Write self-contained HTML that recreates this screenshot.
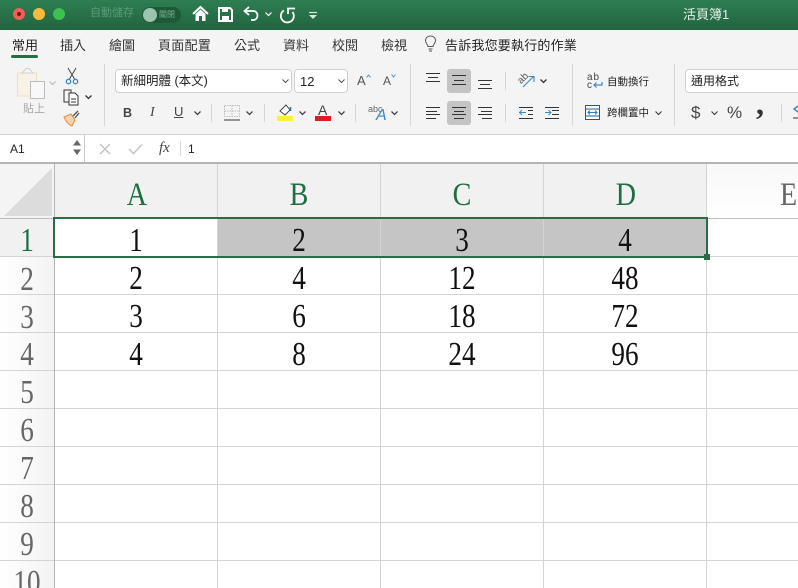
<!DOCTYPE html>
<html><head><meta charset="utf-8">
<style>
html,body{margin:0;padding:0;width:798px;height:588px;overflow:hidden}
#r{position:relative;width:798px;height:588px;overflow:hidden;background:#fff;font-family:"Liberation Sans","Noto Sans CJK TC",sans-serif;color:#333}
.a{position:absolute}
.t{position:absolute;white-space:nowrap;line-height:1}
.h{position:absolute;background:#d4d4d4}
.n{position:absolute;font-family:"Liberation Serif",serif;font-size:34px;line-height:38px;text-align:center;color:#111;transform:scaleX(.8)}
.rh{position:absolute;left:0;width:54px;height:38px;font-family:"Liberation Serif",serif;font-size:34px;line-height:38px;text-align:center;color:#666;transform:scaleX(.8)}
.rb{position:absolute;left:0;width:54px;background:linear-gradient(90deg,#fff,#f3f3f3)}
.ch{position:absolute;top:164px;height:54px;width:163px;font-family:"Liberation Serif",serif;font-size:33px;line-height:62px;text-align:center;color:#1f6e43;background:#f1f1f1}
.ch span{display:inline-block;transform:scaleX(.85)}
svg{position:absolute;overflow:visible}
.box{position:absolute;background:#fff;border:1px solid #d0d0d0;border-radius:4px;box-sizing:border-box}
.sep{position:absolute;width:1px;background:#d6d6d6}
.gb{position:absolute;background:#c4c4c4;border-radius:3px}
</style></head><body><div id="r">

<!-- title bar -->
<div class="a" style="left:0;top:0;width:798px;height:30px;background:linear-gradient(#2e7d53,#22643f)"></div>
<div class="a" style="left:13px;top:8px;width:12px;height:12px;border-radius:50%;background:#ee5f5a"></div>
<div class="a" style="left:17px;top:12px;width:4px;height:4px;border-radius:50%;background:#7a1414"></div>
<div class="a" style="left:33px;top:8px;width:12px;height:12px;border-radius:50%;background:#f6bb3d"></div>
<div class="a" style="left:53px;top:8px;width:12px;height:12px;border-radius:50%;background:#3cc04f"></div>
<div class="t" style="left:90px;top:8px;font-size:11px;color:#5c9b79">自動儲存</div>
<div class="a" style="left:142px;top:7px;width:39px;height:16px;border-radius:8px;background:#1d5a38"></div>
<div class="a" style="left:143px;top:8px;width:14px;height:14px;border-radius:50%;background:#9dc4ae"></div>
<div class="t" style="left:159px;top:11px;font-size:8px;color:#7fae95">關閉</div>
<svg style="left:192px;top:5px" width="17" height="17" viewBox="0 0 17 17"><path d="M1 9 8.500 2 16 9" fill="none" stroke="#fff" stroke-width="2"/><path d="M3.500 9V16H7V11H10V16H13.500V9L8.500 4.500Z" fill="#fff"/></svg>
<svg style="left:218px;top:7px" width="15" height="15" viewBox="0 0 15 15"><path d="M1 1H12L14 3V14H1Z" fill="none" stroke="#fff" stroke-width="2"/><rect x="4" y="1" width="6" height="4" fill="#fff"/><rect x="4" y="9" width="7" height="5" fill="#fff"/></svg>
<svg style="left:243px;top:6px" width="16" height="15" viewBox="0 0 16 15"><path d="M6 1 1.500 5 6 9M2 5H10C13 5 14.500 7 14.500 9.500S13 14 10 14H8" fill="none" stroke="#fff" stroke-width="1.800"/></svg>
<svg style="left:265px;top:12px" width="7" height="5" viewBox="0 0 7 5"><path d="M.5 .5 3.500 3.500 6.500 .5" fill="none" stroke="#fff" stroke-width="1.200"/></svg>
<svg style="left:280px;top:6px" width="16" height="16" viewBox="0 0 16 16"><path d="M15 2.500H8V8" fill="none" stroke="#fff" stroke-width="1.800"/><path d="M3.800 4.500A6.500 6.500 0 1 0 12.500 6" fill="none" stroke="#fff" stroke-width="1.800"/></svg>
<svg style="left:309px;top:12px" width="8" height="7" viewBox="0 0 8 7"><path d="M0 .5H8" stroke="#d8e8de" stroke-width="1.200"/><path d="M0 3H8L4 7Z" fill="#d8e8de"/></svg>
<div class="t" style="left:683px;top:8px;font-size:13px;color:#e6f2ea">活頁簿1</div>

<!-- tabs & ribbon background -->
<div class="a" style="left:0;top:30px;width:798px;height:104px;background:#f4f4f4"></div>
<div class="a" style="left:0;top:134px;width:798px;height:1px;background:#d2d2d2"></div>
<div class="t" style="left:12px;top:39px;font-size:13px;color:#222">常用</div>
<div class="a" style="left:11px;top:55px;width:27px;height:3px;border-radius:2px;background:#217346"></div>
<div class="t" style="left:60px;top:39px;font-size:13px">插入</div>
<div class="t" style="left:109px;top:39px;font-size:13px">繪圖</div>
<div class="t" style="left:158px;top:39px;font-size:13px;letter-spacing:.3px">頁面配置</div>
<div class="t" style="left:234px;top:39px;font-size:13px">公式</div>
<div class="t" style="left:283px;top:39px;font-size:13px">資料</div>
<div class="t" style="left:332px;top:39px;font-size:13px">校閱</div>
<div class="t" style="left:381px;top:39px;font-size:13px">檢視</div>
<svg style="left:424px;top:35px" width="13" height="17" viewBox="0 0 13 17"><path d="M4 11.500C4 9.500 1.500 8.500 1.500 5.500 1.500 3 3.500 1 6.500 1S11.500 3 11.500 5.500C11.500 8.500 9 9.500 9 11.500ZM4.500 14H8.500M5 16H8" fill="none" stroke="#555" stroke-width="1"/></svg>
<div class="t" style="left:445px;top:39px;font-size:13px;color:#222;letter-spacing:.2px">告訴我您要執行的作業</div>

<!-- clipboard -->
<svg style="left:16px;top:67px" width="30" height="35" viewBox="0 0 30 35"><path d="M1.500 6H20.500V29H1.500Z" fill="#f9f1e6" stroke="#efdcc4" stroke-width="1"/><path d="M6 6 10 1.500H13L17 6Z" fill="#f4f4f4" stroke="#cfcfcf"/><rect x="14.500" y="14.500" width="14" height="17" fill="#f8f8f8" stroke="#bcbcbc"/></svg>
<svg style="left:49px;top:81px" width="7" height="5" viewBox="0 0 7 5"><path d="M.5 .5 3.500 3.500 6.500 .5" fill="none" stroke="#bbb" stroke-width="1.200"/></svg>
<div class="t" style="left:23px;top:104px;font-size:11px;color:#a8a8a8">貼上</div>
<svg style="left:65px;top:67px" width="14" height="18" viewBox="0 0 14 18"><path d="M3 1 9.500 12M11 1 4.500 12" stroke="#444" stroke-width="1" fill="none"/><circle cx="3.500" cy="14.500" r="2.200" fill="none" stroke="#3d8ac4" stroke-width="1.300"/><circle cx="10.500" cy="14.500" r="2.200" fill="none" stroke="#3d8ac4" stroke-width="1.300"/></svg>
<svg style="left:63px;top:89px" width="16" height="17" viewBox="0 0 16 17"><path d="M6 13H1V1H8V4" fill="none" stroke="#333"/><path d="M6 4H12L15 7V16H6Z" fill="#fff" stroke="#333"/><path d="M8 10H13M8 13H13" stroke="#333"/></svg>
<svg style="left:85px;top:95px" width="7" height="5" viewBox="0 0 7 5"><path d="M.5 .5 3.500 3.500 6.500 .5" fill="none" stroke="#333" stroke-width="1.300"/></svg>
<svg style="left:63px;top:110px" width="17" height="17" viewBox="0 0 17 17"><path d="M1 7 8 4 12 10 9 16C6 15 3 12 1 7Z" fill="#f9d3ae" stroke="#e58a42"/><path d="M10 6 15 1M12 8 16 3" stroke="#555" stroke-width="1.300"/></svg>
<div class="sep" style="left:104px;top:64px;height:62px"></div>

<!-- font -->
<div class="box" style="left:115px;top:69px;width:177px;height:24px"></div>
<div class="t" style="left:121px;top:75px;font-size:12.500px;color:#222">新細明體 (本文)</div>
<svg style="left:282px;top:79px" width="7" height="5" viewBox="0 0 7 5"><path d="M.5 .5 3.500 3.500 6.500 .5" fill="none" stroke="#555" stroke-width="1.100"/></svg>
<div class="box" style="left:294px;top:69px;width:54px;height:24px"></div>
<div class="t" style="left:300px;top:75px;font-size:13px;color:#222">12</div>
<svg style="left:338px;top:79px" width="7" height="5" viewBox="0 0 7 5"><path d="M.5 .5 3.500 3.500 6.500 .5" fill="none" stroke="#555" stroke-width="1.100"/></svg>
<div class="t" style="left:357px;top:74px;font-size:13px;color:#555">A</div>
<svg style="left:366px;top:74px" width="5" height="4" viewBox="0 0 5 4"><path d="M.5 3.500 2.500 1 4.500 3.500" fill="none" stroke="#4a8fc4"/></svg>
<div class="t" style="left:383px;top:75px;font-size:12px;color:#555">A</div>
<svg style="left:391px;top:74px" width="5" height="4" viewBox="0 0 5 4"><path d="M.5 .5 2.500 3 4.500 .5" fill="none" stroke="#4a8fc4"/></svg>

<div class="t" style="left:123px;top:107px;font-size:12.500px;font-weight:bold;color:#444">B</div>
<div class="t" style="left:150px;top:106px;font-size:14px;font-style:italic;font-family:'Liberation Serif',serif;color:#444">I</div>
<div class="t" style="left:174px;top:105px;font-size:13px;color:#444;text-decoration:underline">U</div>
<svg style="left:194px;top:111px" width="7" height="5" viewBox="0 0 7 5"><path d="M.5 .5 3.500 3.500 6.500 .5" fill="none" stroke="#444" stroke-width="1.300"/></svg>
<div class="sep" style="left:211px;top:104px;height:18px"></div>
<svg style="left:224px;top:105px" width="16" height="16" viewBox="0 0 16 16"><path d="M.5 .5H15.500V11.500H.5ZM8 .5V11.500M.5 6H15.500" fill="none" stroke="#bbb" stroke-dasharray="1.500 1"/><path d="M0 15H16" stroke="#333"/></svg>
<svg style="left:246px;top:111px" width="7" height="5" viewBox="0 0 7 5"><path d="M.5 .5 3.500 3.500 6.500 .5" fill="none" stroke="#444" stroke-width="1.300"/></svg>
<div class="sep" style="left:264px;top:104px;height:18px"></div>
<svg style="left:279px;top:104px" width="14" height="13" viewBox="0 0 14 13"><path d="M1 7 7 1 11 6 6 11Z" fill="#fff" stroke="#444"/><path d="M11.500 7V3" stroke="#2a6ea6" stroke-width="1.500"/></svg>
<div class="a" style="left:277px;top:116px;width:16px;height:5px;background:#ffee3c"></div>
<svg style="left:299px;top:111px" width="7" height="5" viewBox="0 0 7 5"><path d="M.5 .5 3.500 3.500 6.500 .5" fill="none" stroke="#444" stroke-width="1.300"/></svg>
<div class="t" style="left:318px;top:103px;font-size:14px;color:#444">A</div>
<div class="a" style="left:315px;top:116px;width:16px;height:5px;background:#e01b24"></div>
<svg style="left:338px;top:111px" width="7" height="5" viewBox="0 0 7 5"><path d="M.5 .5 3.500 3.500 6.500 .5" fill="none" stroke="#444" stroke-width="1.300"/></svg>
<div class="sep" style="left:355px;top:104px;height:18px"></div>
<div class="t" style="left:368px;top:105px;font-size:9px;color:#666">abc</div>
<div class="t" style="left:376px;top:108px;font-size:16px;font-style:italic;color:#3d8ac4">A</div>
<svg style="left:391px;top:111px" width="7" height="5" viewBox="0 0 7 5"><path d="M.5 .5 3.500 3.500 6.500 .5" fill="none" stroke="#444" stroke-width="1.300"/></svg>
<div class="sep" style="left:410px;top:64px;height:62px"></div>

<!-- alignment -->
<div class="gb" style="left:447px;top:69px;width:24px;height:24px"></div>
<div class="gb" style="left:447px;top:101px;width:24px;height:24px"></div>
<svg style="left:425px;top:72px" width="72" height="60" viewBox="0 0 72 60" fill="none" stroke="#333">
<path d="M1 1.500H15M3 5.500H13M1 9.500H15"/>
<path d="M27 3.500H41M29 8.500H39M27 12.500H41"/>
<path d="M53 8.500H67M55 12.500H65M53 16.500H67"/>
<path d="M1 35.500H15M1 39.500H12M1 42.500H15M1 46.500H11"/>
<path d="M27 35.500H41M29 39.500H39M27 42.500H41M29 46.500H39"/>
<path d="M53 35.500H67M56 39.500H67M53 42.500H67M57 46.500H67"/>
</svg>
<div class="sep" style="left:505px;top:72px;height:18px"></div>
<div class="sep" style="left:505px;top:104px;height:18px"></div>
<div class="t" style="left:518px;top:74px;font-size:10px;color:#555;transform:rotate(-45deg)">ab</div>
<svg style="left:522px;top:75px" width="13" height="13" viewBox="0 0 13 13"><path d="M1 12 12 1M6.500 1.500H12V7" fill="none" stroke="#3d8ac4" stroke-width="1.100"/></svg>
<svg style="left:540px;top:79px" width="7" height="5" viewBox="0 0 7 5"><path d="M.5 .5 3.500 3.500 6.500 .5" fill="none" stroke="#333" stroke-width="1.300"/></svg>
<svg style="left:519px;top:105px" width="40" height="15" viewBox="0 0 40 15" fill="none"><path d="M0 2.500H14M9 5.500H14M9 9.500H14M0 13.500H14" stroke="#333"/><path d="M0 7.500H7M3 5 .5 7.500 3 10" stroke="#3d8ac4"/><path d="M26 2.500H40M33 5.500H40M33 9.500H40M26 13.500H40" stroke="#333"/><path d="M26 7.500H32M29.500 5 32 7.500 29.500 10" stroke="#3d8ac4"/></svg>
<div class="sep" style="left:572px;top:64px;height:62px"></div>

<!-- wrap / merge -->
<div class="t" style="left:587px;top:74px;font-size:10px;line-height:8px;color:#444;letter-spacing:1px">ab<br>c</div>
<svg style="left:593px;top:81px" width="10" height="8" viewBox="0 0 10 8"><path d="M9 1V4H1M3.500 1.500 1 4 3.500 6.500" fill="none" stroke="#3d8ac4" stroke-width="1.200"/></svg>
<div class="t" style="left:607px;top:77px;font-size:10.500px;color:#222">自動換行</div>
<svg style="left:585px;top:105px" width="15" height="15" viewBox="0 0 15 15"><rect x=".5" y=".5" width="14" height="14" fill="#fff" stroke="#1f5c8a"/><path d="M.5 4H14.500M.5 11H14.500" stroke="#1f5c8a"/><path d="M3 7.500H12M5 5.500 3 7.500 5 9.500M10 5.500 12 7.500 10 9.500" fill="none" stroke="#2a7ac0"/></svg>
<div class="t" style="left:607px;top:108px;font-size:10.500px;color:#222">跨欄置中</div>
<svg style="left:655px;top:111px" width="7" height="5" viewBox="0 0 7 5"><path d="M.5 .5 3.500 3.500 6.500 .5" fill="none" stroke="#444" stroke-width="1.200"/></svg>
<div class="sep" style="left:674px;top:64px;height:62px"></div>

<!-- number -->
<div class="box" style="left:685px;top:69px;width:120px;height:24px"></div>
<div class="t" style="left:691px;top:75px;font-size:12px;color:#222">通用格式</div>
<div class="t" style="left:691px;top:104px;font-size:17px;color:#444">$</div>
<svg style="left:711px;top:111px" width="7" height="5" viewBox="0 0 7 5"><path d="M.5 .5 3.500 3.500 6.500 .5" fill="none" stroke="#444" stroke-width="1.200"/></svg>
<div class="t" style="left:727px;top:104px;font-size:17px;color:#444">%</div>
<div class="t" style="left:756px;top:87px;font-size:32px;font-weight:bold;font-family:'Liberation Serif',serif;color:#333">,</div>
<div class="sep" style="left:781px;top:104px;height:18px"></div>
<svg style="left:793px;top:105px" width="6" height="14" viewBox="0 0 6 14"><path d="M5 1 1 4 5 7" fill="none" stroke="#3d8ac4" stroke-width="1.500"/><path d="M0 13H6" stroke="#333"/></svg>

<!-- formula bar -->
<div class="a" style="left:0;top:135px;width:798px;height:27px;background:#fff"></div>
<div class="a" style="left:84px;top:135px;width:1px;height:27px;background:#c8c8c8"></div>
<div class="t" style="left:10px;top:143px;font-size:12px;color:#222">A1</div>
<svg style="left:73px;top:139px" width="8" height="17" viewBox="0 0 8 17"><path d="M4 1 8 6.500H0ZM4 16 8 10.500H0Z" fill="#666"/></svg>
<svg style="left:99px;top:143px" width="12" height="12" viewBox="0 0 12 12"><path d="M1 1 11 11M11 1 1 11" stroke="#c4c4c4" stroke-width="1.500"/></svg>
<svg style="left:128px;top:143px" width="15" height="12" viewBox="0 0 15 12"><path d="M1 6 5.500 10.500 14 1.500" fill="none" stroke="#c4c4c4" stroke-width="1.500"/></svg>
<div class="t" style="left:159px;top:141px;font-size:15px;font-style:italic;font-family:'Liberation Serif',serif;color:#444">fx</div>
<div class="a" style="left:180px;top:141px;width:1px;height:15px;background:#dcdcdc"></div>
<div class="t" style="left:188px;top:143px;font-size:12px;color:#222">1</div>
<div class="a" style="left:0;top:162px;width:798px;height:2px;background:#b4b4b4"></div>

<!-- grid headers -->
<div class="a" style="left:0;top:164px;width:54px;height:54px;background:#f4f4f4"></div>
<svg style="left:4px;top:168px" width="49" height="49" viewBox="0 0 49 49"><path d="M48 0V48H0Z" fill="#dcdcdc"/></svg>
<div class="ch" style="left:55px"><span>A</span></div>
<div class="ch" style="left:218px"><span>B</span></div>
<div class="ch" style="left:381px"><span>C</span></div>
<div class="ch" style="left:544px"><span>D</span></div>
<div class="a" style="left:707px;top:164px;width:91px;height:54px;background:linear-gradient(#f8f8f8,#fff)"></div>
<div class="t" style="left:780px;top:179px;font-family:'Liberation Serif',serif;font-size:33px;color:#666;transform:scaleX(.85);transform-origin:left">E</div>

<!-- row headers -->
<div class="a" style="left:0;top:219px;width:54px;height:38px;background:#f1f1f1"></div>
<div class="rb" style="top:257px;height:331px"></div>
<div class="rh" style="top:222px;color:#1f6e43">1</div>
<div class="rh" style="top:261px">2</div>
<div class="rh" style="top:299px">3</div>
<div class="rh" style="top:336px">4</div>
<div class="rh" style="top:374px">5</div>
<div class="rh" style="top:412px">6</div>
<div class="rh" style="top:450px">7</div>
<div class="rh" style="top:488px">8</div>
<div class="rh" style="top:526px">9</div>
<div class="rh" style="top:564px">10</div>

<!-- selected fill -->
<div class="a" style="left:217px;top:219px;width:489px;height:37px;background:#c5c5c5"></div>

<!-- grid lines -->
<div class="h" style="left:0;top:218px;width:798px;height:1px;background:#bdbdbd"></div>
<div class="h" style="left:0;top:256px;width:798px;height:1px"></div>
<div class="h" style="left:0;top:294px;width:798px;height:1px"></div>
<div class="h" style="left:0;top:332px;width:798px;height:1px"></div>
<div class="h" style="left:0;top:370px;width:798px;height:1px"></div>
<div class="h" style="left:0;top:408px;width:798px;height:1px"></div>
<div class="h" style="left:0;top:446px;width:798px;height:1px"></div>
<div class="h" style="left:0;top:484px;width:798px;height:1px"></div>
<div class="h" style="left:0;top:522px;width:798px;height:1px"></div>
<div class="h" style="left:0;top:560px;width:798px;height:1px"></div>
<div class="h" style="left:54px;top:164px;width:1px;height:424px;background:#b4b4b4"></div>
<div class="h" style="left:217px;top:164px;width:1px;height:424px"></div>
<div class="h" style="left:380px;top:164px;width:1px;height:424px"></div>
<div class="h" style="left:543px;top:164px;width:1px;height:424px"></div>
<div class="h" style="left:706px;top:164px;width:1px;height:424px"></div>

<!-- cells -->
<div class="n" style="left:55px;top:222px;width:162px">1</div>
<div class="n" style="left:218px;top:222px;width:162px">2</div>
<div class="n" style="left:381px;top:222px;width:162px">3</div>
<div class="n" style="left:544px;top:222px;width:162px">4</div>
<div class="n" style="left:55px;top:260px;width:162px">2</div>
<div class="n" style="left:218px;top:260px;width:162px">4</div>
<div class="n" style="left:381px;top:260px;width:162px">12</div>
<div class="n" style="left:544px;top:260px;width:162px">48</div>
<div class="n" style="left:55px;top:298px;width:162px">3</div>
<div class="n" style="left:218px;top:298px;width:162px">6</div>
<div class="n" style="left:381px;top:298px;width:162px">18</div>
<div class="n" style="left:544px;top:298px;width:162px">72</div>
<div class="n" style="left:55px;top:336px;width:162px">4</div>
<div class="n" style="left:218px;top:336px;width:162px">8</div>
<div class="n" style="left:381px;top:336px;width:162px">24</div>
<div class="n" style="left:544px;top:336px;width:162px">96</div>

<!-- selection -->
<div class="a" style="left:53px;top:217px;width:655px;height:41px;border:2px solid #2a6b48;box-sizing:border-box"></div>
<div class="a" style="left:704px;top:254px;width:6px;height:6px;background:#2a6b48"></div>
</div></body></html>
